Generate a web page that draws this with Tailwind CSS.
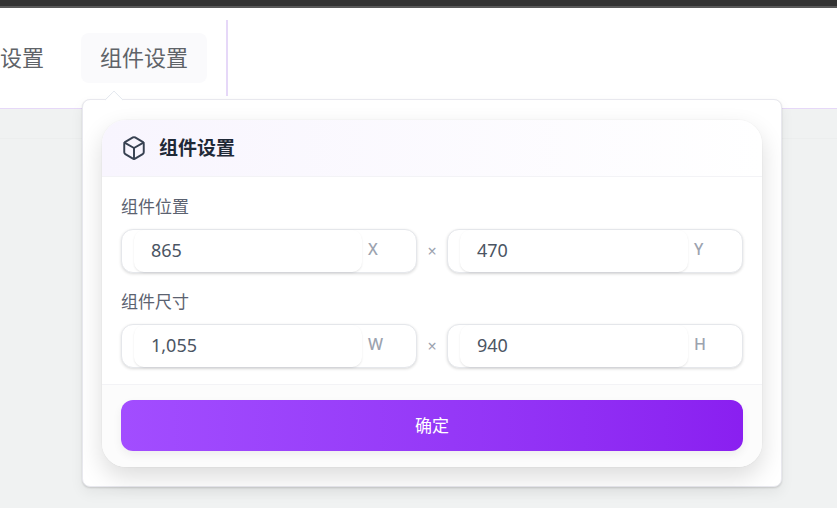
<!DOCTYPE html>
<html lang="zh-CN">
<head>
  <meta charset="UTF-8">
  <title>组件设置</title>
  <script src="https://cdn.jsdelivr.net/npm/@tailwindcss/browser@4"></script>
</head>
<body class="h-[508px] w-[837px] overflow-hidden bg-[#f0f2f2] font-['Noto_Sans','Noto_Sans_CJK_SC',sans-serif]">
  <div class="h-[8px] border-b-2 border-[#5a5a5a] bg-[#333333]"></div>

  <div class="relative">
    <header class="flex h-[101px] items-start border-b border-[#e6d8f8] bg-white pt-[12px]">
      <nav class="flex h-[76px] items-center border-r-2 border-[#e6d8f8] pr-[19px]">
        <span class="mr-[37px] pb-[2px] text-[22px] leading-[48px] text-[#5f6368]">设置</span>
        <span class="rounded-lg bg-[#fafafc] px-[19px] pb-[2px] text-[22px] leading-[48px] text-[#5f6368]">组件设置</span>
      </nav>
    </header>
    <div class="h-[30px] border-b border-[#eceeee]"></div>

    <!-- popover -->
    <div class="absolute top-[91px] left-[82px] h-[388px] w-[700px] rounded-lg border border-[#e8e8ee] bg-white shadow-[0_1px_2px_rgba(0,0,0,0.14),0_6px_14px_rgba(0,0,0,0.06)]">
      <div class="absolute -top-[7px] left-[24px] size-[14px] rotate-45 rounded-tl-[2px] border-t border-l border-[#e3e7ee] bg-white"></div>

      <div class="relative mx-[19px] mt-[20px] flex h-[347px] flex-col overflow-hidden rounded-3xl bg-white shadow-[0_0_0_1px_rgba(0,0,0,0.02),0_10px_25px_rgba(0,0,0,0.14)]">
        <div class="flex h-[57px] items-center gap-[12px] border-b border-[#f3f3f6] bg-gradient-to-r from-[#f8f5fe] to-white pl-[19px]">
          <svg class="size-[26px] text-[#374151]" viewBox="0 0 24 24" fill="none" stroke="currentColor" stroke-width="1.8" stroke-linecap="round" stroke-linejoin="round">
            <path d="M21 16V8a2 2 0 0 0-1-1.73l-7-4a2 2 0 0 0-2 0l-7 4A2 2 0 0 0 3 8v8a2 2 0 0 0 1 1.73l7 4a2 2 0 0 0 2 0l7-4A2 2 0 0 0 21 16z"/>
            <path d="M3.27 6.96 12 12.01l8.73-5.05"/>
            <path d="M12 22.08V12"/>
          </svg>
          <h2 class="text-[19px] font-bold text-[#1f2937]">组件设置</h2>
        </div>

        <div class="flex h-[208px] flex-col border-b border-[#f3f3f6] px-[19px] pt-[17px]">
          <label class="h-[25px] text-[17px] leading-[25px] text-[#5b6270]">组件位置</label>
          <div class="mt-[10px] flex items-center">
            <div class="flex h-[44px] w-[296px] rounded-xl border border-[#e5e7eb] bg-white shadow-[0_1px_3px_rgba(0,0,0,0.15)]">
              <div class="ml-[12px] flex h-[42px] w-[228px] items-center rounded-[10px] pb-[2px] pl-[17px] text-[18px] text-[#4b5563] shadow-[0_1px_2px_rgba(0,0,0,0.1)]">865</div>
              <span class="ml-[6px] text-[16px] leading-[38px] font-medium text-[#9ca3af]">X</span>
            </div>
            <span class="w-[30px] text-center text-[16px] text-[#9ca3af]">×</span>
            <div class="flex h-[44px] w-[296px] rounded-xl border border-[#e5e7eb] bg-white shadow-[0_1px_3px_rgba(0,0,0,0.15)]">
              <div class="ml-[12px] flex h-[42px] w-[228px] items-center rounded-[10px] pb-[2px] pl-[17px] text-[18px] text-[#4b5563] shadow-[0_1px_2px_rgba(0,0,0,0.1)]">470</div>
              <span class="ml-[6px] text-[16px] leading-[38px] font-medium text-[#9ca3af]">Y</span>
            </div>
          </div>

          <label class="mt-[16px] h-[25px] text-[17px] leading-[25px] text-[#5b6270]">组件尺寸</label>
          <div class="mt-[10px] flex items-center">
            <div class="flex h-[44px] w-[296px] rounded-xl border border-[#e5e7eb] bg-white shadow-[0_1px_3px_rgba(0,0,0,0.15)]">
              <div class="ml-[12px] flex h-[42px] w-[228px] items-center rounded-[10px] pb-[2px] pl-[17px] text-[18px] text-[#4b5563] shadow-[0_1px_2px_rgba(0,0,0,0.1)]">1,055</div>
              <span class="ml-[6px] text-[16px] leading-[38px] font-medium text-[#9ca3af]">W</span>
            </div>
            <span class="w-[30px] text-center text-[16px] text-[#9ca3af]">×</span>
            <div class="flex h-[44px] w-[296px] rounded-xl border border-[#e5e7eb] bg-white shadow-[0_1px_3px_rgba(0,0,0,0.15)]">
              <div class="ml-[12px] flex h-[42px] w-[228px] items-center rounded-[10px] pb-[2px] pl-[17px] text-[18px] text-[#4b5563] shadow-[0_1px_2px_rgba(0,0,0,0.1)]">940</div>
              <span class="ml-[6px] text-[16px] leading-[38px] font-medium text-[#9ca3af]">H</span>
            </div>
          </div>
        </div>

        <div class="flex-1 bg-[#fcfcfc] px-[19px] pt-[15px]">
          <button class="h-[51px] w-[622px] rounded-xl bg-gradient-to-r from-[#a24dff] to-[#8a1ff0] text-[17px] text-white shadow-[0_4px_10px_rgba(0,0,0,0.06)]">确定</button>
        </div>
      </div>
    </div>
  </div>
</body>
</html>
